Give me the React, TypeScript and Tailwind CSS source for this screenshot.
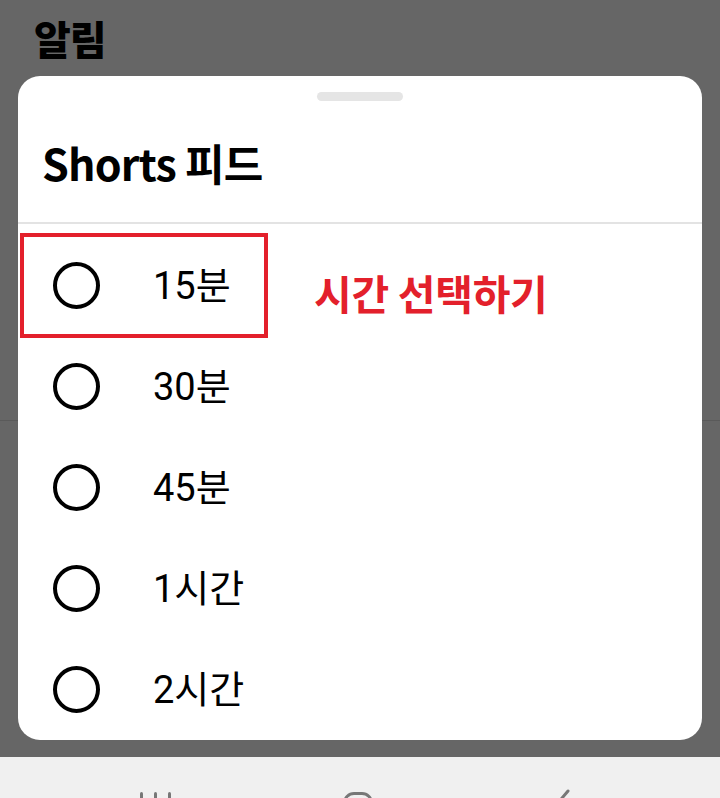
import React from "react"

const kr = { fontFamily: '"Noto Sans CJK KR", "Noto Sans", sans-serif' }
const label = { fontFamily: 'Roboto, "Noto Sans CJK KR", sans-serif' }

const options = ["15분", "30분", "45분", "1시간", "2시간"]

function Radio() {
  return <div className="h-[47px] w-[47px] shrink-0 rounded-full border-4 border-black" />
}

export default function App() {
  return (
    <div className="relative flex h-[798px] w-[720px] flex-col overflow-hidden bg-[#666666]" style={kr}>
      {/* background screen, dimmed */}
      <div className="h-[76px] shrink-0 pl-[34px] pt-[12px]">
        <h1 className="text-[40px] font-black leading-[52px] tracking-[-1px] text-black">알림</h1>
      </div>
      <div className="absolute left-0 top-[420px] h-px w-[18px] bg-[#5a5a5a]" />
      <div className="absolute right-0 top-[420px] h-px w-[18px] bg-[#5a5a5a]" />

      {/* Bottom sheet */}
      <div className="relative mx-[18px] flex h-[664px] shrink-0 flex-col rounded-[22px] bg-white">
        <div className="flex justify-center pt-4">
          <div className="h-[9px] w-[86px] rounded-full bg-[#e5e5e5]" />
        </div>
        <div className="h-[126px] px-[24px] pt-[33px]">
          <h2 className="text-[43px] font-bold leading-[56px] tracking-[-0.8px] text-black">Shorts 피드</h2>
        </div>
        <div className="h-[2px] bg-[#e3e3e3]" />
        <div className="flex flex-col pt-[11px]">
          {options.map((o) => (
            <div key={o} className="flex h-[101px] items-center pl-[35px]">
              <Radio />
              <span className="ml-[53px] text-[38px] leading-none text-black" style={label}>
                {o}
              </span>
            </div>
          ))}
        </div>

        {/* annotation */}
        <div className="absolute left-[2px] top-[157px] h-[105px] w-[248px] border-4 border-[#e3202b]" />
        <span className="absolute left-[296px] top-[196px] text-[41px] font-bold leading-none tracking-[-0.3px] text-[#e3202b]">
          시간 선택하기
        </span>
      </div>

      <div className="h-[17px] shrink-0" />

      {/* Nav bar */}
      <div className="relative flex-1 bg-[#f0f0f0]">
        <div className="absolute left-[140px] top-[35px] flex gap-[11px]">
          <div className="h-3 w-[3px] rounded-full bg-[#777]" />
          <div className="h-3 w-[3px] rounded-full bg-[#777]" />
          <div className="h-3 w-[3px] rounded-full bg-[#777]" />
        </div>
        <div className="absolute left-[343px] top-[35px] h-[30px] w-[30px] rounded-[11px] border-[3px] border-[#777]" />
        <svg className="absolute left-[553px] top-[32px]" width="20" height="30" viewBox="0 0 20 30">
          <path d="M15 2 L4 15 L15 28" fill="none" stroke="#777" strokeWidth="3" strokeLinecap="round" />
        </svg>
      </div>
    </div>
  )
}
